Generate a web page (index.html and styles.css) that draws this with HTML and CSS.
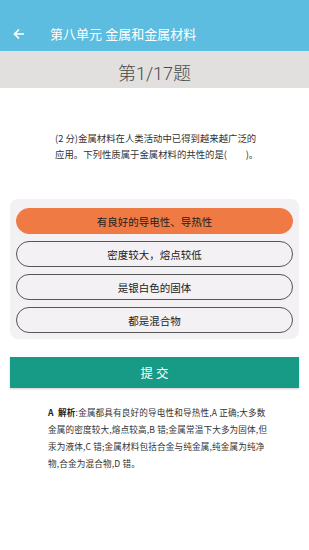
FILE: index.html
```html
<!DOCTYPE html>
<html lang="zh">
<head>
<meta charset="utf-8">
<link rel="stylesheet" href="styles.css">
</head>
<body>
<div class="app">
  <header class="topbar">
    <svg class="back" width="12" height="12" viewBox="0 0 12 12"><path d="M11 6H2M6 1.5L1.5 6L6 10.5" fill="none" stroke="#fff" stroke-width="1.7"/></svg>
    <span class="title">第八单元 金属和金属材料</span>
  </header>
  <div class="qbar">第1/17题</div>
  <div class="question">(2 分)金属材料在人类活动中已得到越来越广泛的<br>应用。下列性质属于金属材料的共性的是(&emsp;&emsp;)。</div>
  <div class="panel">
    <div class="opt selected">有良好的导电性、导热性</div>
    <div class="opt">密度较大，熔点较低</div>
    <div class="opt">是银白色的固体</div>
    <div class="opt">都是混合物</div>
  </div>
  <button class="submit">提 交</button>
  <div class="explain"><b>A&ensp;解析</b>:金属都具有良好的导电性和导热性,A 正确;大多数<br>金属的密度较大,熔点较高,B 错;金属常温下大多为固体,但<br>汞为液体,C 错;金属材料包括合金与纯金属,纯金属为纯净<br>物,合金为混合物,D 错。</div>
</div>
</body>
</html>
```
FILE: styles.css
```css
* { box-sizing: border-box; }
html, body { margin: 0; padding: 0; background: #fff; }
body { font-family: Roboto, "Noto Sans CJK SC", sans-serif; }
.app { width: 309px; min-height: 550px; display: flex; flex-direction: column; }
.topbar {
  height: 51px; background: #5cbde1; display: flex; align-items: center;
  padding: 16px 0 0 13px;
}
.back { flex: none; }
.title { color: #fff; font-size: 13px; margin-left: 25px; }
.qbar {
  height: 37px; background: #e2e0de; color: #4a4a4a; font-size: 18px; font-weight: 300;
  display: flex; align-items: center; justify-content: center; padding-top: 4px;
}
.question {
  margin: 43px 0 0 55px; font-size: 9.4px; line-height: 15.5px; color: #333;
  font-family: "Noto Sans CJK SC", sans-serif; white-space: nowrap; height: 68px;
}
.panel {
  margin: 0 10px; background: #f3f1f3; border-radius: 8px;
  padding: 9px 6px 6px; display: flex; flex-direction: column; gap: 7px;
}
.opt {
  height: 26px; border: 1px solid #555; border-radius: 13px;
  display: flex; align-items: center; justify-content: center;
  font-size: 10.5px; color: #222; font-family: "Noto Sans CJK SC", sans-serif;
}
.opt.selected { background: #f07a44; border-color: #f07a44; }
.submit {
  margin: 18px 10px 0; height: 31px; border: 0; background: #179b87; color: #fff;
  font-size: 12.5px; font-family: "Noto Sans CJK SC", sans-serif;
  box-shadow: 0 1px 2px rgba(0,0,0,0.2);
}
.explain {
  margin: 16px 0 0 48px; font-size: 8.6px; line-height: 17px; color: #333;
  letter-spacing: 0.15px;
  font-family: "Noto Sans CJK SC", sans-serif; white-space: nowrap;
}
.explain b { color: #222; }
```
